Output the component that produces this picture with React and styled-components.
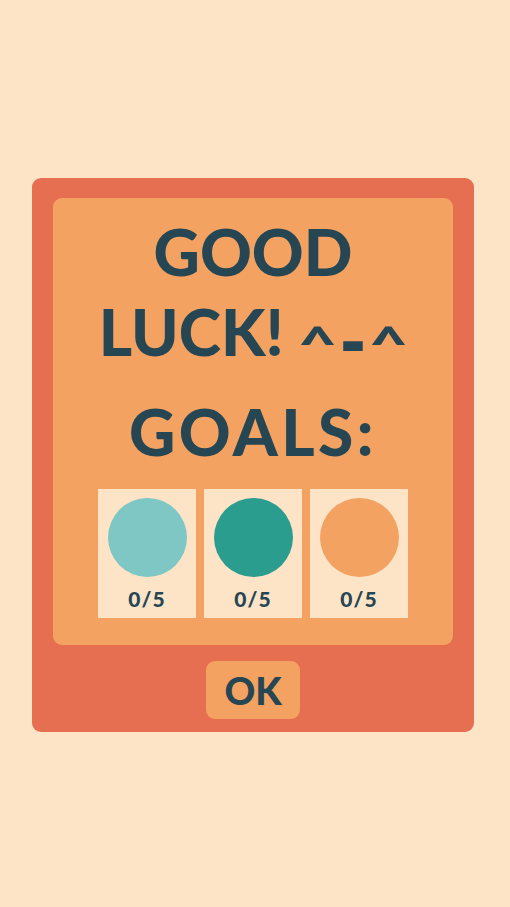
import React from "react";
import styled, { createGlobalStyle } from "styled-components";

const Global = createGlobalStyle`
  html, body { margin: 0; padding: 0; background: #fde4c7; }
  body { font-family: "Lato", "Open Sans", sans-serif; }
`;

const Page = styled.div`
  min-height: 907px;
  display: flex;
  align-items: center;
  justify-content: center;
  padding: 2px 4px 0 0;
  box-sizing: border-box;
`;

const Card = styled.div`
  width: 442px;
  background: #e76f51;
  border-radius: 9px;
  padding: 20px 21px 13px;
  box-sizing: border-box;
  display: flex;
  flex-direction: column;
  align-items: center;
`;

const Panel = styled.div`
  align-self: stretch;
  background: #f4a261;
  border-radius: 9px;
  padding: 14px 0 27px;
  display: flex;
  flex-direction: column;
  align-items: center;
`;

const Heading = styled.div`
  color: #264653;
  font-family: "Lato", sans-serif;
  font-weight: 900;
  font-size: 64px;
  line-height: 80px;
  text-align: center;
  letter-spacing: ${(p) => p.$ls || 0}px;
  margin-top: ${(p) => p.$mt || 0}px;
  white-space: nowrap;
`;

const Caret = styled.span`
  display: inline-block;
  transform: translateY(11px) scale(1.05, 0.75);
`;

const Dash = styled.span`
  display: inline-block;
  margin: 0 5px;
  transform: translateY(8px) scale(1.15, 1.35);
`;

const Goals = styled.div`
  display: flex;
  gap: 8px;
  margin-top: 17px;
`;

const Goal = styled.div`
  width: 98px;
  height: 129px;
  background: #fde4c7;
  display: flex;
  flex-direction: column;
  align-items: center;
  padding-top: 9px;
  box-sizing: border-box;
`;

const Dot = styled.div`
  width: 79px;
  height: 79px;
  border-radius: 50%;
  background: ${(p) => p.$color};
`;

const Count = styled.div`
  margin-top: 10px;
  color: #264653;
  font-family: "Lato", sans-serif;
  font-weight: 900;
  font-size: 21px;
  line-height: 24px;
  letter-spacing: 1px;
`;

const OkButton = styled.button`
  margin-top: 16px;
  width: 94px;
  height: 58px;
  border: none;
  border-radius: 9px;
  background: #f4a261;
  color: #264653;
  font-family: "Lato", sans-serif;
  font-weight: 900;
  font-size: 38px;
  padding: 0;
  cursor: pointer;
`;

export default function App() {
  const goals = ["#7ec7c5", "#2a9d8f", "#f4a261"];
  return (
    <>
      <Global />
      <Page>
        <Card>
          <Panel>
            <Heading>GOOD</Heading>
            <Heading>
              LUCK! <Caret>^</Caret>
              <Dash>-</Dash>
              <Caret>^</Caret>
            </Heading>
            <Heading $mt={20} $ls={3.5}>
              GOALS:
            </Heading>
            <Goals>
              {goals.map((c, i) => (
                <Goal key={i}>
                  <Dot $color={c} />
                  <Count>0/5</Count>
                </Goal>
              ))}
            </Goals>
          </Panel>
          <OkButton>OK</OkButton>
        </Card>
      </Page>
    </>
  );
}
